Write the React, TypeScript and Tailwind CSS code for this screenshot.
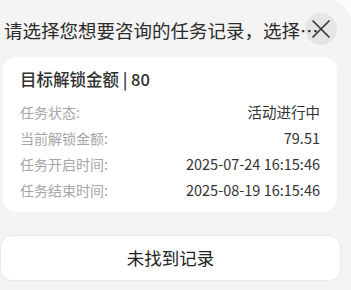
const rows = [
  { label: "任务状态:", value: "活动进行中" },
  { label: "当前解锁金额:", value: "79.51" },
  { label: "任务开启时间:", value: "2025-07-24 16:15:46" },
  { label: "任务结束时间:", value: "2025-08-19 16:15:46" },
];

function CloseIcon() {
  return (
    <svg width="20" height="20" viewBox="0 0 20 20" fill="none" aria-hidden="true">
      <path d="M2 2L18 18M2 18L18 2" stroke="currentColor" strokeWidth="1.7" strokeLinecap="round" />
    </svg>
  );
}

export default function App() {
  return (
    <div
      className="w-[351px] h-[290px] overflow-hidden bg-[#fcfcfc]"
      style={{ fontFamily: '"Noto Sans CJK SC", "Noto Sans", sans-serif' }}
    >
      <div className="relative h-full rounded-tr-[22px] bg-[#f4f4f4] text-[#333]">
        {/* Title */}
        <div className="pt-[18px] pl-[4px]">
          <p className="whitespace-nowrap text-[18.5px] leading-[24px] text-[#2b2b2b]">
            请选择您想要咨询的任务记录，选择…
          </p>
        </div>

        {/* Close */}
        <button
          type="button"
          aria-label="关闭"
          className="absolute top-[13px] left-[305px] flex items-center justify-center w-[32px] h-[32px] rounded-full bg-black/[0.06] text-[#3a3a3a]"
        >
          <CloseIcon />
        </button>

        {/* Record card */}
        <div className="mt-[15px] ml-[3px] w-[334px] rounded-[14px] bg-white pt-[11px] pb-[9px] pl-[17px] pr-[17px]">
          <div className="text-[16.5px] leading-[22px] font-medium text-[#2f2f2f]">
            目标解锁金额 | 80
          </div>
          <div className="mt-[9px] flex flex-col">
            {rows.map((r) => (
              <div key={r.label} className="flex items-center justify-between h-[26px]">
                <span className="text-[14px] text-[#a6a6a6]">{r.label}</span>
                <span className="text-[14.5px] text-[#333]">{r.value}</span>
              </div>
            ))}
          </div>
        </div>

        {/* Not found button */}
        <button
          type="button"
          className="mt-[23px] flex items-center justify-center w-[341px] h-[46px] rounded-[12px] bg-white border border-[#e9e9e9] text-[17.5px] text-[#222]"
        >
          未找到记录
        </button>
      </div>
    </div>
  );
}
